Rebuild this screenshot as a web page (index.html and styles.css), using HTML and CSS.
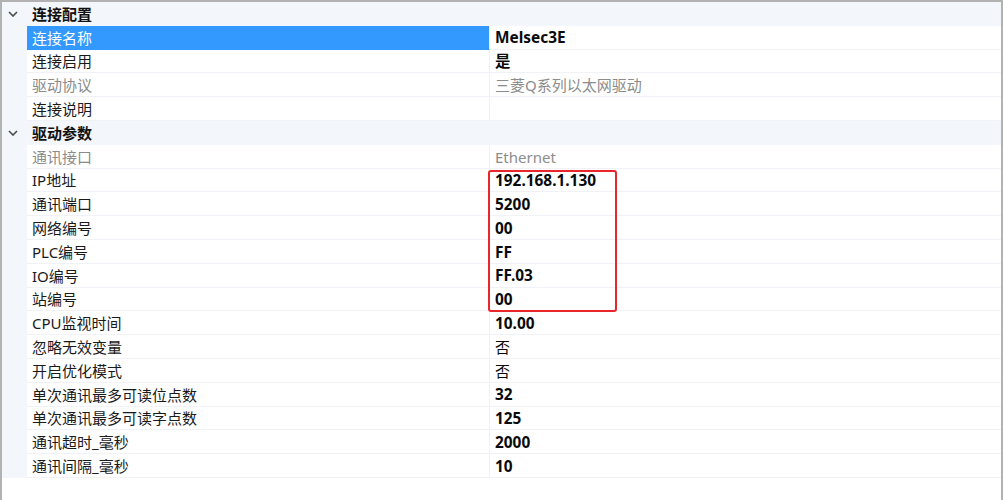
FILE: index.html
```html
<!DOCTYPE html>
<html lang="zh-CN">
<head>
<meta charset="utf-8">
<title>属性</title>
<link rel="stylesheet" href="styles.css">
</head>
<body>
<div class="frame">
  <div class="grid">
    <div class="row group">
      <div class="gutter"><svg class="chev" width="10" height="6" viewBox="0 0 10 6"><path d="M1 1 L5 5 L9 1" fill="none" stroke="#4a4a4a" stroke-width="1.6"/></svg></div>
      <div class="gname">连接配置</div>
    </div>
    <div class="row"><div class="gutter"></div><div class="label sel">连接名称</div><div class="value">Melsec3E</div></div>
    <div class="row"><div class="gutter"></div><div class="label">连接启用</div><div class="value">是</div></div>
    <div class="row"><div class="gutter"></div><div class="label dis">驱动协议</div><div class="value dis">三菱Q系列以太网驱动</div></div>
    <div class="row"><div class="gutter"></div><div class="label">连接说明</div><div class="value"></div></div>
    <div class="row group">
      <div class="gutter"><svg class="chev" width="10" height="6" viewBox="0 0 10 6"><path d="M1 1 L5 5 L9 1" fill="none" stroke="#4a4a4a" stroke-width="1.6"/></svg></div>
      <div class="gname">驱动参数</div>
    </div>
    <div class="row"><div class="gutter"></div><div class="label dis">通讯接口</div><div class="value dis">Ethernet</div></div>
    <div class="row"><div class="gutter"></div><div class="label">IP地址</div><div class="value">192.168.1.130</div></div>
    <div class="row"><div class="gutter"></div><div class="label">通讯端口</div><div class="value">5200</div></div>
    <div class="row"><div class="gutter"></div><div class="label">网络编号</div><div class="value">00</div></div>
    <div class="row"><div class="gutter"></div><div class="label">PLC编号</div><div class="value">FF</div></div>
    <div class="row"><div class="gutter"></div><div class="label">IO编号</div><div class="value">FF.03</div></div>
    <div class="row"><div class="gutter"></div><div class="label">站编号</div><div class="value">00</div></div>
    <div class="row"><div class="gutter"></div><div class="label">CPU监视时间</div><div class="value">10.00</div></div>
    <div class="row"><div class="gutter"></div><div class="label">忽略无效变量</div><div class="value reg">否</div></div>
    <div class="row"><div class="gutter"></div><div class="label">开启优化模式</div><div class="value reg">否</div></div>
    <div class="row"><div class="gutter"></div><div class="label">单次通讯最多可读位点数</div><div class="value">32</div></div>
    <div class="row"><div class="gutter"></div><div class="label">单次通讯最多可读字点数</div><div class="value">125</div></div>
    <div class="row"><div class="gutter"></div><div class="label">通讯超时_毫秒</div><div class="value">2000</div></div>
    <div class="row"><div class="gutter"></div><div class="label">通讯间隔_毫秒</div><div class="value">10</div></div>
  </div>
  <div class="mark"></div>
</div>
</body>
</html>
```

FILE: styles.css
```css
html, body {
  margin: 0;
  padding: 0;
  background: #ffffff;
}
body {
  width: 1003px;
  height: 500px;
  overflow: hidden;
  font-family: "Noto Sans", "Noto Sans CJK SC", sans-serif;
  font-size: 15px;
  color: #111111;
}
.frame {
  position: relative;
  box-sizing: border-box;
  width: 1003px;
  height: 500px;
  border-top: 2px solid #b2b2b2;
  border-left: 2px solid #b2b2b2;
  border-right: 2px solid #b2b2b2;
}
.grid {
  display: flex;
  flex-direction: column;
}
.row {
  display: grid;
  grid-template-columns: 25px 463px 1fr;
  height: 23.8px;
}
.gutter {
  background: #f3f6fb;
  display: flex;
  align-items: center;
  justify-content: center;
}
.chev {
  display: block;
  margin-left: -3px;
}
.label, .value, .gname {
  display: flex;
  align-items: center;
  box-sizing: border-box;
  padding-left: 5px;
  padding-top: 2px;
  white-space: nowrap;
  line-height: 1;
}
.label {
  border-right: 1px solid #eef1f7;
  border-bottom: 1px solid #f0f2f7;
  color: #1a1a1a;
}
.value {
  border-bottom: 1px solid #f0f2f7;
  font-weight: 700;
  color: #0a0a0a;
  font-size: 15.4px;
}
.value.reg {
  font-weight: 400;
  font-size: 15px;
}
.dis {
  color: #8c8c8c;
  font-weight: 400;
}
.value.dis {
  font-size: 15px;
}
.label.sel {
  background: #3399ff;
  color: #ffffff;
  border-bottom-color: #3399ff;
}
.group .gname {
  grid-column: 2 / 4;
  background: #f3f6fb;
  font-weight: 700;
  color: #111111;
}
.mark {
  position: absolute;
  left: 486px;
  top: 168px;
  width: 129px;
  height: 142px;
  box-sizing: border-box;
  border: 2px solid #e8262b;
  border-radius: 3px;
}
```
